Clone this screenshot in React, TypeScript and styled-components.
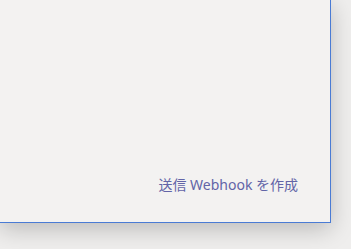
import React from "react";
import styled, { createGlobalStyle } from "styled-components";

const Global = createGlobalStyle`
  html, body { margin: 0; padding: 0; background: #efeeed; }
  body { width: 351px; height: 249px; overflow: hidden; font-family: "Noto Sans", "Noto Sans CJK JP", sans-serif; }
`;

const Page = styled.div`
  width: 351px;
  height: 249px;
  display: flex;
  align-items: flex-start;
`;

const Panel = styled.div`
  width: 330px;
  height: 222px;
  background: #f3f2f1;
  border-right: 1px solid #4a7bd4;
  border-bottom: 1px solid #4a7bd4;
  box-shadow: 0 6px 22px rgba(0, 0, 0, 0.22);
  display: flex;
  flex-direction: column;
  justify-content: flex-end;
  align-items: flex-end;
  box-sizing: content-box;
`;

const Footer = styled.div`
  padding: 0 32px 27px 0;
`;

const LinkText = styled.span`
  color: #6264a7;
  font-size: 14px;
  line-height: 20px;
  font-family: "Noto Sans", "Noto Sans CJK JP", sans-serif;
`;

export default function App() {
  return (
    <>
      <Global />
      <Page>
        <Panel>
          <Footer>
            <LinkText>送信 Webhook を作成</LinkText>
          </Footer>
        </Panel>
      </Page>
    </>
  );
}
